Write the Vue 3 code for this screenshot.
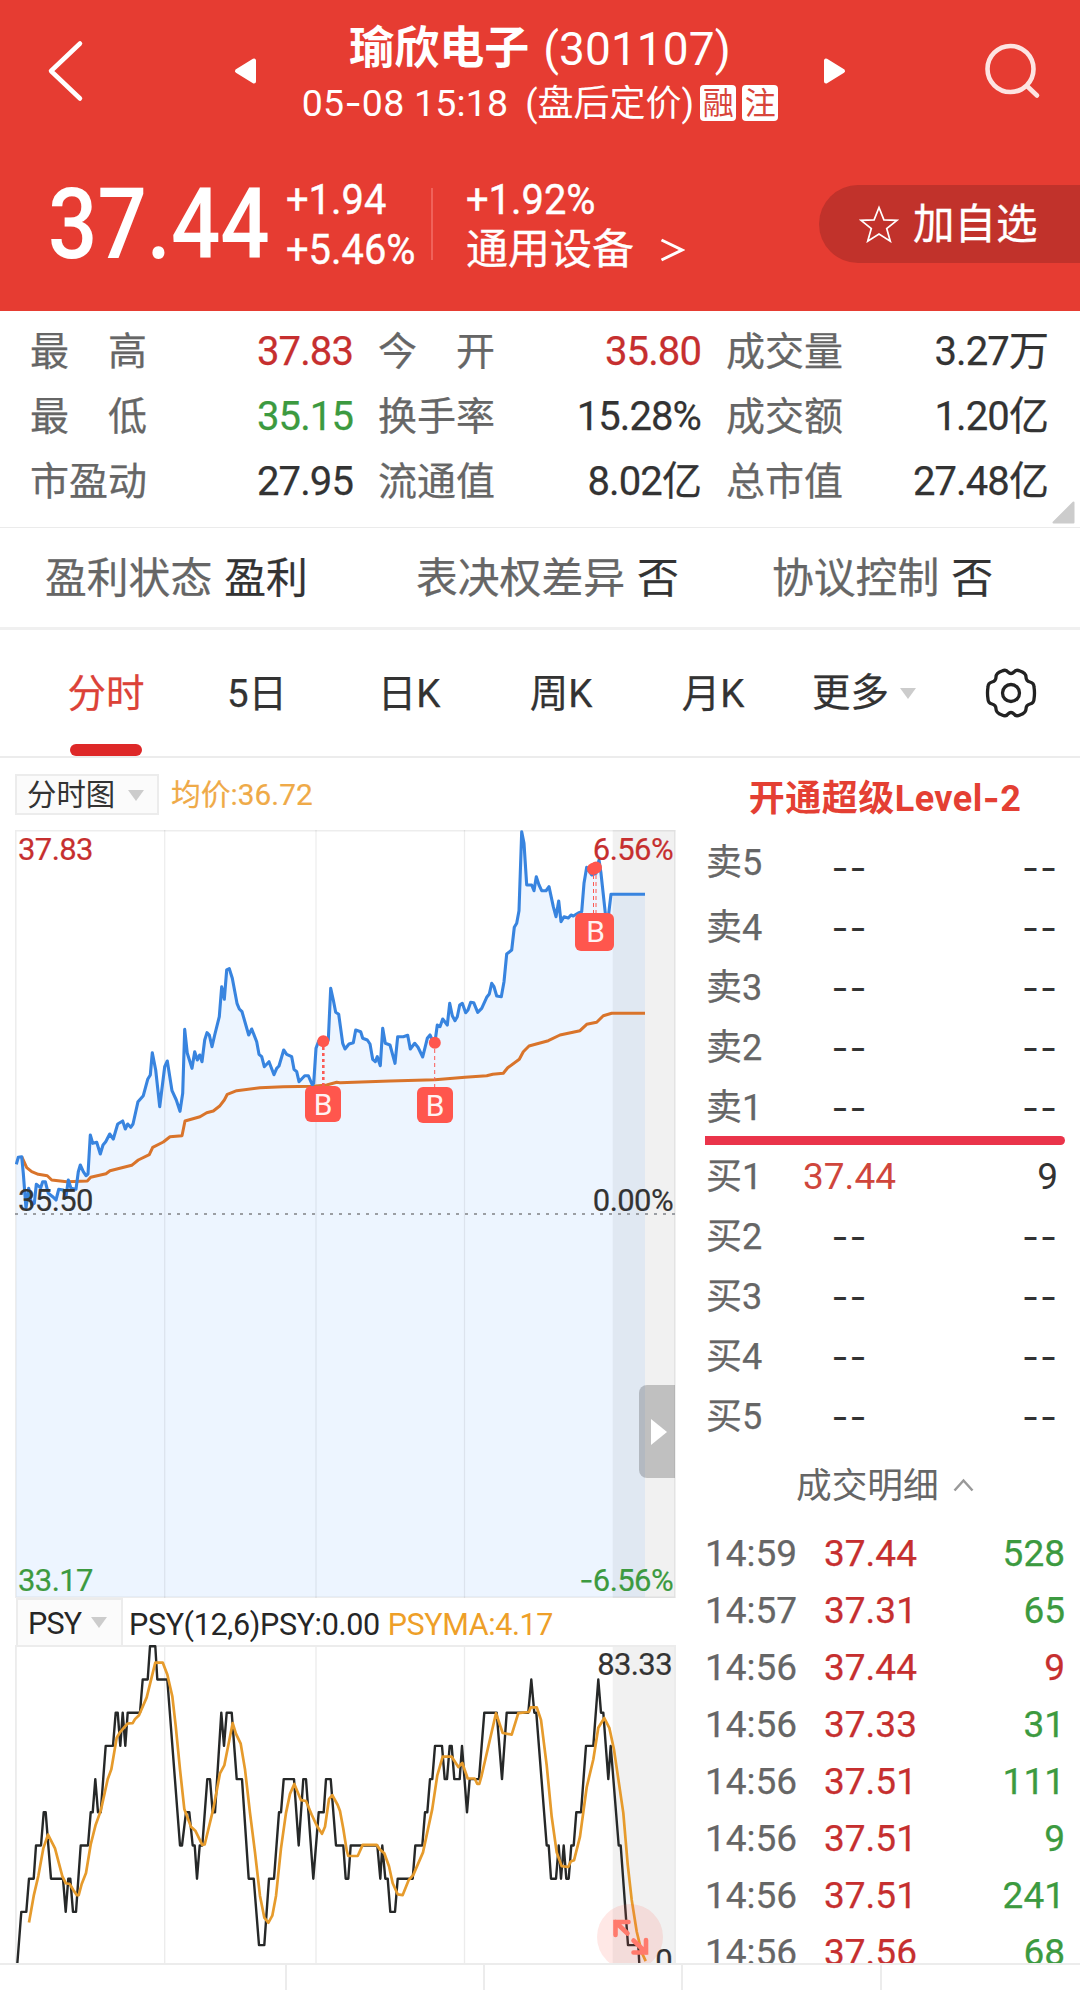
<script setup>
const stats = [
  ['最　高', '37.83', 'up'], ['今　开', '35.80', 'up'], ['成交量', '3.27万', ''],
  ['最　低', '35.15', 'down'], ['换手率', '15.28%', ''], ['成交额', '1.20亿', ''],
  ['市盈动', '27.95', ''], ['流通值', '8.02亿', ''], ['总市值', '27.48亿', ''],
]
const sells = ['卖5', '卖4', '卖3', '卖2', '卖1']
const buys = [
  ['买1', '37.44', '9'], ['买2', '--', '--'], ['买3', '--', '--'], ['买4', '--', '--'], ['买5', '--', '--'],
]
const trades = [
  ['14:59', '37.44', '528', 'down'], ['14:57', '37.31', '65', 'down'], ['14:56', '37.44', '9', 'up'],
  ['14:56', '37.33', '31', 'down'], ['14:56', '37.51', '111', 'down'], ['14:56', '37.51', '9', 'down'],
  ['14:56', '37.51', '241', 'down'], ['14:56', '37.56', '68', 'down'],
]

// Series are stored at three units per pixel; the second half starts 1020 units in.
const HALF = 1020
const toPoints = (left, right, mapY) =>
  [...left, ...right.map(([x, y]) => [x + HALF, y])]
    .map(([x, y]) => `${(x / 3 - 15).toFixed(1)},${mapY(y).toFixed(1)}`)
    .join(' ')

const priceL = [[49,1033],[55,1012],[65,1010],[70,1060],[78,1165],[86,1105],[95,1155],[103,1150],[109,1093],[122,1103],[128,1085],[136,1085],[145,1120],[158,1130],[168,1140],[176,1108],[190,1110],[198,1130],[205,1080],[213,1105],[228,1108],[235,1055],[241,1035],[250,1055],[258,1067],[264,1062],[271,945],[278,970],[290,967],[301,1002],[309,975],[317,965],[329,942],[340,957],[353,912],[368,903],[376,927],[383,912],[392,922],[399,912],[414,845],[430,827],[443,778],[451,765],[457,698],[467,750],[479,860],[494,740],[502,723],[516,812],[529,840],[540,874],[548,820],[554,628],[562,700],[576,745],[584,695],[592,720],[599,705],[606,725],[614,660],[621,638],[628,645],[636,680],[644,645],[658,590],[665,500],[673,538],[680,450],[688,446],[697,475],[711,550],[718,567],[726,575],[746,645],[755,627],[770,665],[777,703],[785,710],[793,740],[807,725],[822,764],[830,745],[837,738],[851,690],[860,703],[875,710],[882,748],[890,755],[897,785],[914,767],[925,767],[937,795],[941,790],[948,685],[956,663],[970,662],[985,660],[992,505],[1000,540],[1007,577],[1016,583]]
const priceR = [[8,670],[15,687],[27,672],[40,668],[47,630],[62,635],[68,655],[82,660],[90,672],[98,718],[106,725],[112,710],[121,737],[128,625],[136,670],[150,675],[165,730],[173,650],[190,650],[203,646],[211,687],[224,670],[234,682],[248,711],[262,655],[270,645],[277,660],[285,665],[292,615],[300,620],[308,597],[322,615],[329,550],[337,587],[345,602],[352,590],[359,555],[367,550],[377,578],[384,570],[392,547],[401,548],[413,577],[425,565],[440,532],[448,522],[455,490],[462,500],[470,528],[484,530],[492,485],[500,402],[515,390],[523,322],[530,310],[537,272],[545,35],[552,70],[560,195],[575,195],[582,212],[589,170],[597,195],[605,212],[618,212],[627,200],[640,260],[648,290],[656,243],[663,305],[672,290],[685,294],[693,285],[700,288],[717,278],[725,275],[732,190],[740,142],[755,165],[768,160],[777,120],[783,160],[797,290],[805,290],[813,223],[915,223]]
const avgL = [[65,1010],[72,1025],[80,1043],[95,1055],[115,1063],[142,1067],[155,1080],[200,1085],[262,1083],[272,1072],[318,1061],[330,1052],[395,1036],[415,1020],[448,1004],[458,982],[490,966],[510,950],[546,947],[555,903],[600,890],[620,878],[640,873],[660,857],[673,840],[682,823],[710,812],[780,803],[850,800],[940,799],[980,795],[1010,787]]
const avgR = [[0,788],[150,783],[285,779],[375,772],[440,767],[458,763],[490,760],[503,743],[538,718],[550,695],[567,678],[625,662],[660,645],[720,632],[740,613],[770,607],[790,587],[815,580],[915,580]]
const mainY = (y) => y / 3 - 10
const price = toPoints(priceL, priceR, mainY)
const average = toPoints(avgL, avgR, mainY)
const area = `${price} 630,767 1,767`

// PSY values move in whole steps below the top of the panel.
const psyL = [[50,9.8],[64,8],[79,8],[87,7],[101,7],[108,6],[123,6],[131,5],[137,5],[145,6],[153,7],[189,7],[197,8],[205,7],[211,7],[219,8],[228,8],[242,6],[264,6],[272,5],[278,5],[286,4],[294,5],[302,5],[317,3],[339,3],[347,2],[353,2],[361,3],[368,2],[376,3],[383,2],[420,2],[428,1],[443,1],[450,0],[466,0],[472,1],[502,1],[540,6],[546,6],[558,5],[568,5],[578,6],[584,6],[591,7],[599,6],[607,6],[622,4],[630,4],[638,5],[645,5],[664,2],[672,3],[680,2],[695,2],[710,4],[726,4],[746,7],[761,7],[777,9],[793,9],[807,7],[822,7],[837,5],[843,5],[851,4],[882,4],[896,6],[910,4],[918,4],[940,7],[956,5],[971,5],[978,4],[992,4],[1008,6]]
const psyR = [[10,6],[17,7],[25,7],[32,6],[112,6],[121,7],[127,6],[136,7],[143,7],[151,8],[165,8],[173,7],[218,7],[226,6],[247,6],[255,5],[262,5],[270,4],[277,4],[285,3],[306,3],[314,4],[321,4],[329,3],[335,3],[343,4],[359,4],[366,3],[381,5],[389,4],[417,4],[433,2],[470,2],[486,4],[500,2],[565,2],[574,1],[583,2],[589,2],[620,6],[626,6],[633,7],[648,7],[656,6],[663,7],[671,6],[679,7],[686,7],[694,6],[701,6],[709,5],[723,5],[738,3],[760,3],[775,1],[783,2],[790,2],[805,4],[812,3],[836,6],[842,6],[864,9],[895,9],[899,9.8]]
const maL = [[87,1397],[101,1330],[115,1280],[130,1210],[144,1175],[165,1210],[187,1280],[197,1298],[209,1300],[220,1315],[230,1328],[236,1328],[245,1300],[258,1272],[272,1200],[287,1150],[302,1115],[323,1035],[334,1010],[350,930],[361,915],[383,894],[398,893],[405,883],[417,873],[440,828],[466,740],[488,740],[502,770],[517,825],[527,900],[540,1010],[553,1110],[573,1155],[586,1165],[607,1201],[614,1200],[640,1110],[660,1020],[673,1000],[698,893],[708,920],[722,945],[735,1010],[750,1120],[765,1220],[780,1330],[793,1385],[805,1398],[817,1380],[828,1330],[843,1210],[858,1120],[870,1072],[883,1047],[903,1088],[918,1090],[935,1125],[950,1152],[966,1173],[975,1155],[987,1085],[997,1075],[1013,1100]]
const maR = [[0,1115],[10,1160],[20,1215],[25,1229],[53,1229],[68,1201],[110,1201],[120,1213],[133,1222],[147,1255],[158,1298],[173,1326],[188,1328],[206,1290],[220,1277],[249,1220],[277,1110],[292,1025],[308,978],[335,978],[355,1004],[367,994],[383,1033],[404,1033],[412,1047],[418,1047],[425,1025],[468,868],[488,918],[515,922],[535,868],[567,865],[572,853],[590,853],[603,885],[620,1000],[635,1130],[650,1220],[665,1255],[685,1257],[692,1243],[702,1240],[720,1180],[740,1055],[760,985],[775,905],[793,880],[808,905],[822,960],[850,1120],[863,1250],[875,1340],[890,1420],[905,1473],[917,1495]]
const psy = toPoints(psyL, psyR, (k) => 1.3 + 33.2 * k)
const psyma = toPoints(maL, maR, (y) => (y - 697) / 2.529 + 0.6)
</script>

<template>
  <div class="app">
    <header class="header">
      <div class="bar">
        <svg class="back" width="38" height="62" viewBox="0 0 38 62"><path d="M33 3.500 4 31 33 58.500" fill="none" stroke="#fff" stroke-width="4.500" stroke-linecap="round" stroke-linejoin="round" /></svg>
        <svg class="prev" width="23" height="28" viewBox="0 0 23 28"><path d="M3 14 20 3.500v21Z" fill="#fff" stroke="#fff" stroke-width="4" stroke-linejoin="round" /></svg>
        <div class="heading">
          <div class="title"><b>瑜欣电子</b><span>(301107)</span></div>
          <div class="sub"><span class="time">05<i class="dash">-</i>08 15:18</span><span class="phase">(盘后定价)</span><em>融</em><em>注</em></div>
        </div>
        <svg width="23" height="28" viewBox="0 0 23 28"><path d="M20 14 3 3.500v21Z" fill="#fff" stroke="#fff" stroke-width="4" stroke-linejoin="round" /></svg>
        <svg class="search" width="58" height="58" viewBox="0 0 58 58"><g fill="none" stroke="#fde4e2" stroke-width="4.600" stroke-linecap="round"><circle cx="26.500" cy="27" r="23" /><path d="m43 44 10 9.500" /></g></svg>
      </div>
      <div class="quote">
        <div class="last"><span>37.44</span></div>
        <div class="change"><span>+1.94</span><span>+5.46%</span></div>
        <div class="rule"></div>
        <div class="sector"><span class="pct">+1.92%</span><span class="name">通用设备
          <svg width="25" height="24" viewBox="0 0 25 24"><path d="M1.500 2 22 12 1.500 22" fill="none" stroke="#fff" stroke-width="3" /></svg></span></div>
        <div class="add">
          <svg width="40" height="38" viewBox="0 0 40 38"><path d="m20 2.500 4.900 12.300 13.100.5-10.300 8.200 3.600 12.700L20 29 8.700 36.200l3.600-12.700L2 15.300l13.100-.5Z" fill="none" stroke="#fff" stroke-width="1.700" /></svg>
          <span>加自选</span>
        </div>
      </div>
    </header>

    <section class="stats">
      <div v-for="s in stats" :key="s[0]" class="stat"><span>{{ s[0] }}</span><b :class="s[2]">{{ s[1] }}</b></div>
      <svg class="corner" width="23" height="23" viewBox="0 0 23 23"><path d="M21.500 1.500v20h-20Z" fill="#ccc" stroke="#ccc" stroke-width="2" stroke-linejoin="round" /></svg>
    </section>

    <section class="flags">
      <div>盈利状态<b>盈利</b></div>
      <div>表决权差异<b>否</b></div>
      <div>协议控制<b>否</b></div>
    </section>

    <nav class="tabs">
      <span class="tab active">分时</span><span class="tab">5日</span><span class="tab">日K</span><span class="tab">周K</span><span class="tab">月K</span>
      <span class="more">更多<i class="caret"></i></span>
      <svg class="gear" width="52" height="52" viewBox="0 0 52 52"><g fill="none" stroke="#222" stroke-width="3.300" stroke-linejoin="round"><path d="M17 4Q21 2 23 5Q26 8 29 5Q31 2 35 4Q41 6 41 10Q41 14 45 15Q49 16 49 20Q50 26 49 32Q49 36 45 37Q41 38 41 42Q41 46 35 48Q31 50 29 47Q26 44 23 47Q21 50 17 48Q11 46 11 42Q11 38 7 37Q3 36 3 32Q2 26 3 20Q3 16 7 15Q11 14 11 10Q11 6 17 4Z" /><circle cx="26" cy="26" r="8.500" /></g></svg>
    </nav>

    <main class="body">
      <div class="charts">
        <div class="chart-head"><span class="select">分时图<i class="caret"></i></span><span class="avg">均价:36.72</span></div>
        <div class="panel main">
          <svg width="661" height="768" viewBox="0 0 661 768">
            <rect x="597.700" width="62.300" height="768" fill="#f1f1f1" />
            <polygon :points="area" fill="#3795ff" fill-opacity=".09" />
            <g stroke="#000" stroke-opacity=".07" stroke-width="1.300"><path d="M149.700 0v768M301 0v768M449.500 0v768" /><path d="M0 .7h661M0 767.300h661M.8 0v768M660 0v768" stroke-width="1.600" /></g>
            <path d="M0 384h661" stroke="#9b9ea3" stroke-width="2" stroke-dasharray="3 6" />
            <polyline :points="average" fill="none" stroke="#d9742b" stroke-width="3" stroke-linejoin="round" />
            <polyline :points="price" fill="none" stroke="#3884df" stroke-width="3.100" stroke-linejoin="round" />
            <g stroke="#fb5a55" fill="none"><path d="M308.300 217v39" stroke-width="2.600" stroke-dasharray="3 3" /><path d="M419.700 219v38M578.500 45v38M581 45v38" stroke-width="1" stroke-dasharray="4 3" /></g>
            <g fill="#ff564d"><circle cx="308.300" cy="211.300" r="6" /><circle cx="419.800" cy="212.700" r="6" /><circle cx="578" cy="39" r="6" /><circle cx="581" cy="37.500" r="6" /></g>
          </svg>
          <span class="mark m1">B</span><span class="mark m2">B</span><span class="mark m3">B</span>
          <span class="lab up tl">37.83</span><span class="lab up tr">6.56%</span>
          <span class="lab ml">35.50</span><span class="lab mr">0.00%</span>
          <span class="lab down bl">33.17</span><span class="lab down br"><i class="dash">-</i>6.56%</span>
          <span class="handle"><svg width="16" height="26" viewBox="0 0 16 26"><path d="M0 0 16 13 0 26Z" fill="#fff" /></svg></span>
        </div>
        <div class="psy-head"><span class="select small">PSY<i class="caret"></i></span><span class="p1">PSY(12,6)PSY:0.00</span><span class="p2">PSYMA:4.17</span></div>
        <div class="panel psy">
          <svg width="661" height="318" viewBox="0 0 661 318">
            <rect x="597.700" width="62.300" height="318" fill="#f1f1f1" />
            <g stroke="#ececec"><path d="M149.700 0v318M301 0v318M449.500 0v318" stroke-width="1.300" /><path d="M0 1h661M.8 0v318M660 0v318" stroke-width="2" /></g>
            <polyline :points="psy" fill="none" stroke="#262828" stroke-width="2.400" stroke-linejoin="round" />
            <polyline :points="psyma" fill="none" stroke="#e69b2c" stroke-width="2.700" stroke-linejoin="round" />
            <circle cx="615" cy="292" r="33" fill="#ff5a50" fill-opacity=".14" />
            <g fill="none" stroke="#ff7a6c" stroke-width="4.600" stroke-linecap="round"><path d="M600.500 290v-13h13M600.500 277l12 11.500" /><path d="M631 295v12.500h-12.500M631 307.500l-12.500-12" /></g>
          </svg>
          <span class="lab pt">83.33</span><span class="lab pb">0</span>
        </div>
      </div>

      <aside class="book">
        <div class="level">开通超级Level<i class="dash">-</i>2</div>
        <div v-for="s in sells" :key="s" class="row sell"><span class="side">{{ s }}</span><span class="val dash">--</span><span class="qty dash">--</span></div>
        <div class="split"></div>
        <div v-for="b in buys" :key="b[0]" class="row"><span class="side">{{ b[0] }}</span><span class="val" :class="b[1] === '--' ? 'dash' : 'hot'">{{ b[1] }}</span><span class="qty" :class="{ dash: b[2] === '--' }">{{ b[2] }}</span></div>
        <div class="detail">成交明细<svg width="21" height="14" viewBox="0 0 21 14"><path d="m1.500 12.500 9-10 9 10" fill="none" stroke="#999" stroke-width="2.500" /></svg></div>
        <div v-for="(t, i) in trades" :key="i" class="trade"><span>{{ t[0] }}</span><span class="up">{{ t[1] }}</span><span class="amount" :class="t[3]">{{ t[2] }}</span></div>
      </aside>
    </main>

    <footer class="footer"><i></i><i></i><i></i><i></i><i></i></footer>
  </div>
</template>

<style>
body { margin: 0; background: #fff; }
</style>

<style scoped>
.app { width: 1080px; height: 1990px; overflow: hidden; display: flex; flex-direction: column; background: #fff; color: #333; font-family: Roboto, "Noto Sans CJK SC", sans-serif; white-space: nowrap; }
.app * { box-sizing: border-box; }
svg { display: block; flex: none; }
b, i, em { font-weight: inherit; font-style: normal; }
.up { color: #c62f2f; }
.down { color: #3c9a40; }
.dash { font-family: Inter, sans-serif; }

.header { height: 311px; flex: none; background: #e63c32; color: #fff; }
.bar { display: flex; height: 142px; align-items: center; padding-left: 47px; }
.prev { margin-left: 149px; }
.heading { width: 566px; height: 142px; padding-top: 22px; }
.title { height: 52px; line-height: 54px; display: flex; justify-content: center; font-size: 46px; }
.title b { font-weight: 700; font-size: 45px; margin-right: 14px; }
.title span { letter-spacing: .1px; }
.sub { height: 58px; display: flex; justify-content: center; align-items: center; line-height: 58px; font-size: 36px; }
.time { font-size: 37.5px; letter-spacing: .2px; margin-right: 17px; }
.sub em { width: 36px; height: 36px; line-height: 38px; border-radius: 4px; background: #fff; color: #d8453b; font-size: 31px; text-align: center; margin-left: 6px; }
.phase { padding-top: 1px; }
.search { margin-left: 138px; }

.quote { height: 164px; display: flex; align-items: center; }
.last { width: 286px; padding-left: 48px; font-size: 99px; font-weight: 500; line-height: 110px; }
.last span { display: block; transform: scaleX(.878); transform-origin: left; }
.change { width: 145px; display: flex; flex-direction: column; font-size: 43px; line-height: 50px; }
.change span, .pct { transform: scaleX(.927); transform-origin: left; -webkit-text-stroke: .4px #fff; }
.rule { width: 2px; height: 72px; background: #f0625a; }
.sector { width: 386px; padding-left: 33px; display: flex; flex-direction: column; font-size: 43px; line-height: 50px; }
.name { display: flex; align-items: center; gap: 26px; font-size: 42px; padding-top: 1px; margin-bottom: -1px; -webkit-text-stroke: .3px #fff; }
.add { flex: 1; height: 78px; border-radius: 39px 0 0 39px; background: #c1322b; display: flex; align-items: center; padding-left: 40px; gap: 14px; font-size: 41.5px; line-height: 78px; }
.add span { padding-top: 2px; -webkit-text-stroke: .3px #fff; }

.stats { position: relative; flex: none; height: 217px; padding: 8px 32px 0 30px; display: grid; grid-template-columns: 323px 323px 322px; column-gap: 25px; grid-auto-rows: 65px; border-bottom: 1px solid #ebebeb; }
.stat { display: flex; justify-content: space-between; font-size: 39px; line-height: 66px; color: #666; -webkit-text-stroke: .25px currentColor; }
.stat b { font-size: 40px; letter-spacing: -.9px; }
.stat b:not(.up):not(.down) { color: #333; }
.corner { position: absolute; right: 5px; bottom: 3px; }

.flags { flex: none; height: 102px; border-bottom: 3px solid #f0f0f0; display: flex; align-items: center; padding-left: 45px; padding-top: 2px; font-size: 41.800px; line-height: 98px; color: #666; -webkit-text-stroke: .25px currentColor; }
.flags div:nth-child(1) { width: 371px; }
.flags div:nth-child(2) { width: 356px; }
.flags b { color: #333; margin-left: 12px; }

.tabs { flex: none; height: 128px; border-bottom: 2px solid #ececec; display: flex; align-items: center; line-height: 128px; font-size: 38.500px; padding-left: 30px; -webkit-text-stroke: .25px currentColor; }
.tab { position: relative; width: 152px; height: 126px; text-align: center; }
.tab:not(.active) { left: -1px; }
.active { color: #dc4238; }
.active::after { content: ""; position: absolute; left: 40px; bottom: 0; width: 72px; height: 12px; border-radius: 6px; background: #de2828; }
.more { display: flex; align-items: center; margin-left: 22px; width: 173px; gap: 11px; }
.caret { width: 0; height: 0; border: solid transparent; border-width: 11px 8.500px 0; border-top-color: #ccc; }

.body { flex: none; height: 1205px; display: flex; overflow: hidden; }
.charts { width: 690px; padding-left: 15px; }
.chart-head { height: 72px; padding-top: 16px; display: flex; align-items: flex-start; font-size: 29.400px; line-height: 39px; }
.select { display: flex; align-items: center; justify-content: space-between; width: 144px; height: 41px; padding: 1px 13px 0 10px; border: 2px solid #ececec; background: #fbfbfb; }
.avg { color: #efaa48; margin-left: 12px; padding-top: 1px; font-size: 29.800px; -webkit-text-stroke: .2px currentColor; }
.panel { position: relative; width: 661px; overflow: hidden; }
.main { height: 768px; }
.psy { height: 318px; }
.lab { position: absolute; font-size: 31px; line-height: 36px; letter-spacing: -.6px; -webkit-text-stroke: .2px currentColor; }
.tl { left: 3px; top: 2px; }
.tr { right: 3px; top: 2px; }
.ml { left: 3px; top: 353px; }
.mr { right: 3px; top: 353px; }
.bl { left: 3px; bottom: -1px; }
.br { right: 3px; bottom: -1px; }
.pt { right: 4px; top: 2px; }
.pb { right: 4px; top: 298px; }
.mark { position: absolute; width: 36px; height: 36px; border-radius: 6px; background: #ff564d; color: #fff2f2; font-size: 30px; line-height: 37px; text-align: center; }
.m1 { left: 290px; top: 256px; }
.m2 { left: 402px; top: 257px; }
.m3 { left: 560px; top: 83px; width: 39px; height: 38px; padding-left: 2px; }
.handle { position: absolute; left: 624px; top: 555px; width: 36px; height: 93px; border-radius: 8px 0 0 8px; background: rgba(0, 0, 0, .2); display: flex; align-items: center; padding-left: 12px; }
.psy-head { height: 47px; display: flex; align-items: center; font-size: 30.500px; line-height: 47px; color: #262626; }
.small { margin-left: 1px; width: 107px; height: 47px; line-height: 50px; padding: 3px 14px 0 10px; border-bottom-width: 0; letter-spacing: -.8px; }
.small .caret { margin-top: -4px; }
.p1 { margin-left: 6px; padding-top: 6px; letter-spacing: -.35px; }
.p2 { margin-left: 8px; padding-top: 6px; color: #ee9f28; letter-spacing: -.4px; }

.book { width: 390px; padding: 0 15px; }
.level { height: 80px; line-height: 80px; font-size: 36px; font-weight: 700; color: #e43f33; text-align: center; letter-spacing: .5px; }
.row { height: 60px; line-height: 60px; display: flex; font-size: 37px; padding-right: 7px; }
.side { width: 76px; color: #666; font-size: 36px; padding-left: 1px; -webkit-text-stroke: .25px currentColor; }
.val { width: 137px; text-align: center; }
.qty { flex: 1; text-align: right; }
.row .dash { font-size: 37px; letter-spacing: 1px; }
.hot { color: #cf463c; }
.level + .row .side { position: relative; top: -5px; }
.split { height: 9px; margin: -2px 0 2px; border-radius: 0 5px 5px 0; background: #ea344a; }
.detail { height: 78px; line-height: 78px; display: flex; align-items: center; font-size: 35.700px; color: #666; padding-left: 91px; gap: 14px; }
.detail svg { margin-top: -2px; }
.trade { height: 57px; line-height: 57px; display: flex; font-size: 37px; color: #666; -webkit-text-stroke: .25px currentColor; }
.trade span { width: 119px; }
.trade .amount { flex: 1; text-align: right; }

.footer { flex: none; height: 27px; border-top: 2px solid #ececec; display: flex; }
.footer i { width: 198.600px; border-right: 2px solid #ececec; }
.footer i:first-child { width: 287px; }
.footer i:last-child { border: 0; }
</style>
